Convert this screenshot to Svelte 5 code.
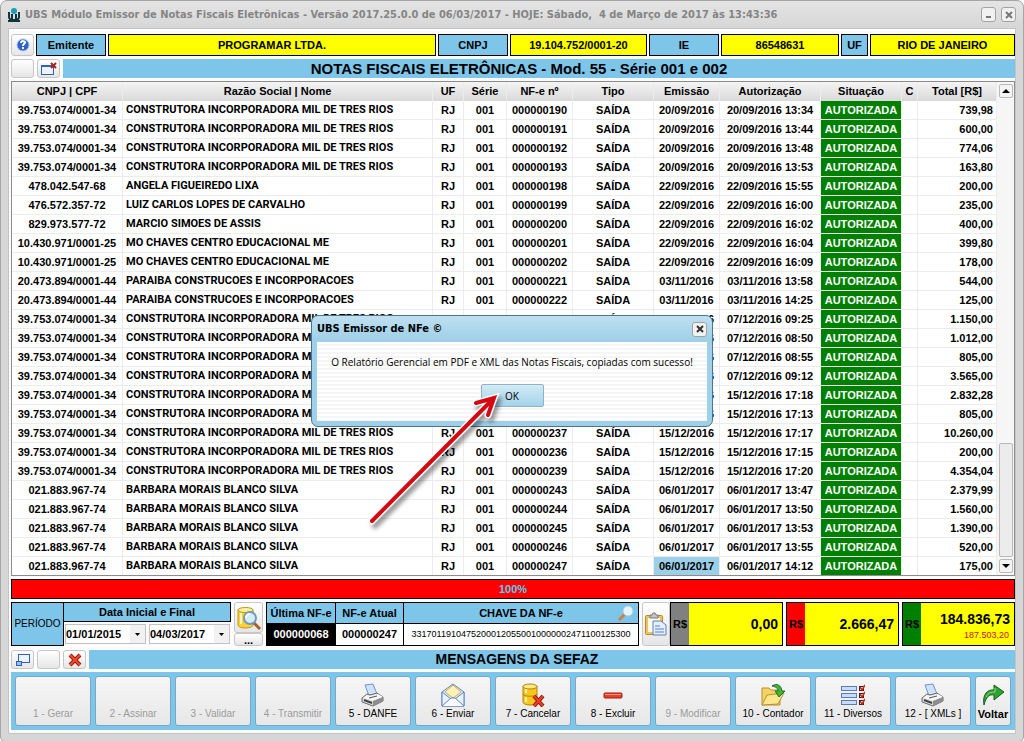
<script lang="ts">
	interface Nota {
		doc: string;
		nome: string;
		nf: string;
		emissao: string;
		hora: string;
		total: string;
	}

	const CONSTRUTORA = ['39.753.074/0001-34', 'CONSTRUTORA INCORPORADORA MIL DE TRES RIOS'];
	const CHAVES = ['10.430.971/0001-25', 'MO CHAVES CENTRO EDUCACIONAL ME'];
	const PARAIBA = ['20.473.894/0001-44', 'PARAIBA CONSTRUCOES E INCORPORACOES'];
	const BARBARA = ['021.883.967-74', 'BARBARA MORAIS BLANCO SILVA'];

	function nota([doc, nome]: string[], nf: number, emissao: string, hora: string, total: string): Nota {
		return { doc, nome, nf: String(nf).padStart(9, '0'), emissao, hora, total };
	}

	const notas: Nota[] = [
		nota(CONSTRUTORA, 190, '20/09/2016', '13:34', '739,98'),
		nota(CONSTRUTORA, 191, '20/09/2016', '13:44', '600,00'),
		nota(CONSTRUTORA, 192, '20/09/2016', '13:48', '774,06'),
		nota(CONSTRUTORA, 193, '20/09/2016', '13:53', '163,80'),
		nota(['478.042.547-68', 'ANGELA FIGUEIREDO LIXA'], 198, '22/09/2016', '15:55', '200,00'),
		nota(['476.572.357-72', 'LUIZ CARLOS LOPES DE CARVALHO'], 199, '22/09/2016', '16:00', '235,00'),
		nota(['829.973.577-72', 'MARCIO SIMOES DE ASSIS'], 200, '22/09/2016', '16:02', '400,00'),
		nota(CHAVES, 201, '22/09/2016', '16:04', '399,80'),
		nota(CHAVES, 202, '22/09/2016', '16:09', '178,00'),
		nota(PARAIBA, 221, '03/11/2016', '13:58', '544,00'),
		nota(PARAIBA, 222, '03/11/2016', '14:25', '125,00'),
		nota(CONSTRUTORA, 231, '07/12/2016', '09:25', '1.150,00'),
		nota(CONSTRUTORA, 228, '07/12/2016', '08:50', '1.012,00'),
		nota(CONSTRUTORA, 229, '07/12/2016', '08:55', '805,00'),
		nota(CONSTRUTORA, 230, '07/12/2016', '09:12', '3.565,00'),
		nota(CONSTRUTORA, 238, '15/12/2016', '17:18', '2.832,28'),
		nota(CONSTRUTORA, 235, '15/12/2016', '17:13', '805,00'),
		nota(CONSTRUTORA, 237, '15/12/2016', '17:17', '10.260,00'),
		nota(CONSTRUTORA, 236, '15/12/2016', '17:15', '200,00'),
		nota(CONSTRUTORA, 239, '15/12/2016', '17:20', '4.354,04'),
		nota(BARBARA, 243, '06/01/2017', '13:47', '2.379,99'),
		nota(BARBARA, 244, '06/01/2017', '13:50', '1.560,00'),
		nota(BARBARA, 245, '06/01/2017', '13:53', '1.390,00'),
		nota(BARBARA, 246, '06/01/2017', '13:55', '520,00'),
		nota(BARBARA, 247, '06/01/2017', '14:12', '175,00')
	];

	const acoes = [
		{ label: '1 - Gerar', icon: '' },
		{ label: '2 - Assinar', icon: '' },
		{ label: '3 - Validar', icon: '' },
		{ label: '4 - Transmitir', icon: '' },
		{ label: '5 - DANFE', icon: 'printer' },
		{ label: '6 - Enviar', icon: 'mail' },
		{ label: '7 - Cancelar', icon: 'cancel' },
		{ label: '8 - Excluir', icon: 'minus' },
		{ label: '9 - Modificar', icon: '' },
		{ label: '10 - Contador', icon: 'folder' },
		{ label: '11 - Diversos', icon: 'list' },
		{ label: '12 - [ XMLs ]', icon: 'printer' }
	];

	let selected = $state(notas.length - 1);
	let showDialog = $state(true);
	let inicio = $state('01/01/2015');
	let fim = $state('04/03/2017');
</script>

{#snippet icon(name: string)}
	<svg width="24" height="24" viewBox="0 0 24 24" aria-hidden="true">
		{#if name === 'printer'}
			<path d="M4 2 12 1l4 10-8 2z" fill="#cfe2fb" stroke="#6f95cf" />
			<path d="m1 15 5-4 3 1 7-2 6 4v4L12 23 1 19z" fill="#d9d9d9" stroke="#6b6b6b" />
			<path d="m2 15 10 3 10-4-5-3-8 2-3-1z" fill="#f6f6f6" />
			<path d="m12 18 10-4v4l-10 5z" fill="#8d8d8d" />
			<path d="m3 17 8 3" stroke="#444" stroke-width="2" />
			<path d="m8 15 8-2" stroke="#555" />
		{:else if name === 'mail'}
			<path d="M1 9 12 1l11 8v14H1z" fill="#dbe9fc" stroke="#6185c2" />
			<path d="m4 9 8-7 8 7-8 6z" fill="#fff2b8" stroke="#d3b04c" />
			<path d="m1 9 9 7h4l9-7v14H1z" fill="#e8f1fe" stroke="#6185c2" />
			<path d="m1 23 9-8h4l9 8" fill="#f8fbff" stroke="#6185c2" />
		{:else if name === 'cancel'}
			<path d="M2 3v16c0 4 14 4 14 0V3z" fill="#fac51c" stroke="#b38600" />
			<ellipse cx="9" cy="3.5" rx="7" ry="2.5" fill="#ffe98d" stroke="#b38600" />
			<path d="M2 11c0 3 14 3 14 0" fill="none" stroke="#b38600" />
			<path d="M5 6v4M5 14v5" stroke="#fff3b5" stroke-width="2" />
			<path d="m13 13 9 10m0-10-9 10" stroke="#8d1208" stroke-width="4" />
			<path d="m13 13 9 10m0-10-9 10" stroke="#ed4127" stroke-width="2" />
		{:else if name === 'minus'}
			<rect x="3" y="10" width="18" height="5" rx="1" fill="#e34326" stroke="#a81a08" />
			<path d="M4 11.5h16" stroke="#ff927b" />
		{:else if name === 'folder'}
			<path d="M1 5h7l2 2h9v15H1z" fill="#f6d269" stroke="#b99029" />
			<path d="m1 22 5-10 17-2-6 11z" fill="#ffe68f" stroke="#b99029" />
			<path d="M11 3c5-3 9-1 10 5h3l-6 6-4-6h3c0-3-2-4-6-5z" fill="#43b13c" stroke="#1c7323" />
		{:else if name === 'list'}
			{#each [3, 10, 17] as y}
				<rect x="0.5" y={y + 0.5} width="15" height="4" fill="#c8dcf8" stroke="#5a7db8" />
				<rect x="18.5" y={y + 0.5} width="4" height="4" fill="#fff" stroke="#222" />
				<path d="m19 {y + 1} 2 3 3-5" fill="none" stroke="#d22a17" stroke-width="1.5" />
			{/each}
		{:else if name === 'back'}
			<path d="M3 22C1 11 7 6 13 7V2l10 7-10 8v-5C8 11 5 14 3 22z" fill="#2fa32f" stroke="#14621a" />
			<path d="M5 14c2-4 5-5 9-5V5" fill="none" stroke="#8fdd7d" />
		{:else if name === 'search'}
			<path d="M1 4v15c0 4 15 4 15 0V4z" fill="#fbd13c" stroke="#c39412" />
			<ellipse cx="8.5" cy="4" rx="7.5" ry="2.5" fill="#fff0a0" stroke="#c39412" />
			<path d="M4 7v11" stroke="#fff5bd" stroke-width="2" />
			<path d="m17 17 6 6" stroke="#a55f26" stroke-width="3" />
			<circle cx="13" cy="12" r="6" fill="#d7ecfb" stroke="#6e9ac2" stroke-width="2" />
			<path d="M9 12c0-3 2-4 4-4" fill="none" stroke="#fff" stroke-width="2" />
		{:else if name === 'clipboard'}
			<rect x="1.5" y="3.5" width="17" height="19" rx="1" fill="#f0c35a" stroke="#b98a2b" />
			<rect x="4" y="6" width="12" height="14" fill="#fffbe9" />
			<path d="M6 6h8V3h-2l-1-2H9L8 3H6z" fill="#c4c4c4" stroke="#777" />
			<path d="M9 9h8l5 4v10H9z" fill="#e5effd" stroke="#5b80be" />
			<path d="M11 14h5m-5 3h9m-9 3h9" stroke="#4e81cf" />
		{/if}
	</svg>
{/snippet}

<main class="window">
	<header class="titlebar">
		<svg width="12" height="16" viewBox="0 0 12 16" aria-hidden="true">
			<path d="M1 5v5c0 4 10 4 10 0V5" fill="none" stroke="#12343c" stroke-width="2" />
			<path d="M4 7v5M8 7v5" stroke="#12343c" stroke-width="2" />
			<circle cx="6" cy="4" r="3" fill="#1a9cb3" />
			<path d="M0 13h12v2H0z" fill="#12343c" />
		</svg>
		<h1>UBS Módulo Emissor de Notas Fiscais Eletrônicas - Versão 2017.25.0.0 de 06/03/2017 - HOJE: Sábado,&nbsp; 4 de Março de 2017 às 13:43:36</h1>
		<button class="win-btn" aria-label="Minimizar"><svg width="7" height="7" viewBox="0 0 7 7"><path d="M1 6h5" stroke="#777" stroke-width="2" /></svg></button>
		<button class="win-btn" aria-label="Fechar"><svg width="8" height="8" viewBox="0 0 8 8"><path d="m1 1 6 6m0-6-6 6" stroke="#777" stroke-width="2" /></svg></button>
	</header>

	<div class="content">
		<div class="emitente">
			<button class="tool" aria-label="Ajuda">
				<svg width="14" height="14" viewBox="0 0 14 14">
					<circle cx="7" cy="7" r="6" fill="#2f62cf" stroke="#a9bfe8" />
					<path d="M5 5c0-3 5-2 4 0-1 1-2 1-2 3m0 1v2" fill="none" stroke="#fff" stroke-width="2" />
				</svg>
			</button>
			<span class="tag w-label">Emitente</span>
			<span class="tag value w-name">PROGRAMAR LTDA.</span>
			<span class="tag w-label">CNPJ</span>
			<span class="tag value w-cnpj">19.104.752/0001-20</span>
			<span class="tag w-label">IE</span>
			<span class="tag value w-ie">86548631</span>
			<span class="tag w-uf">UF</span>
			<span class="tag value w-city">RIO DE JANEIRO</span>
		</div>

		<div class="section">
			<button class="tool" aria-label="Vazio"></button>
			<button class="tool" aria-label="Fechar janela">
				<svg width="18" height="14" viewBox="0 0 18 14">
					<rect x="1.5" y="3.5" width="12" height="9" fill="#eef4fe" stroke="#2d62b8" />
					<path d="M1 4h13" stroke="#2d62b8" stroke-width="2" />
					<path d="m11 1 5 5m0-5-5 5" stroke="#a8231c" stroke-width="2" />
				</svg>
			</button>
			<h2>NOTAS FISCAIS ELETRÔNICAS - Mod. 55 - Série 001 e 002</h2>
		</div>

		<div class="grid">
			<table>
				<colgroup>
					<col class="c-doc" /><col /><col class="c-uf" /><col class="c-serie" />
					<col class="c-nf" /><col class="c-tipo" /><col class="c-emissao" /><col class="c-aut" />
					<col class="c-sit" /><col class="c-c" /><col class="c-total" />
				</colgroup>
				<thead>
					<tr>
						<th>CNPJ | CPF</th>
						<th>Razão Social | Nome</th>
						<th>UF</th>
						<th>Série</th>
						<th>NF-e nº</th>
						<th>Tipo</th>
						<th>Emissão</th>
						<th>Autorização</th>
						<th>Situação</th>
						<th>C</th>
						<th>Total [R$]</th>
					</tr>
				</thead>
				<tbody>
					{#each notas as n, i}
						<tr onclick={() => (selected = i)}>
							<td>{n.doc}</td>
							<td class="nome">{n.nome}</td>
							<td>RJ</td>
							<td>001</td>
							<td>{n.nf}</td>
							<td>SAÍDA</td>
							<td class:selected={selected === i}>{n.emissao}</td>
							<td>{n.emissao} {n.hora}</td>
							<td class="situacao">AUTORIZADA</td>
							<td></td>
							<td class="total">{n.total}</td>
						</tr>
					{/each}
				</tbody>
			</table>
			<div class="scroll">
				<button aria-label="Rolar para cima"><svg width="8" height="4" viewBox="0 0 8 4"><path d="M0 4h8L4 0z" /></svg></button>
				<div class="thumb"></div>
				<button aria-label="Rolar para baixo"><svg width="8" height="4" viewBox="0 0 8 4"><path d="M0 0h8L4 4z" /></svg></button>
			</div>
		</div>

		<div class="progress" role="progressbar" aria-valuenow="100">100%</div>

		<div class="summary">
			<div class="periodo">
				<div class="periodo-label">PERÍODO</div>
				<div class="periodo-dates">
					<div class="cap">Data Inicial e Final</div>
					<div class="dates">
						<div class="date">
							<input aria-label="Data inicial" bind:value={inicio} />
							<button aria-label="Abrir data inicial"><svg width="5" height="3" viewBox="0 0 5 3"><path d="M0 0h5L2.5 3z" /></svg></button>
						</div>
						<div class="date">
							<input aria-label="Data final" bind:value={fim} />
							<button aria-label="Abrir data final"><svg width="5" height="3" viewBox="0 0 5 3"><path d="M0 0h5L2.5 3z" /></svg></button>
						</div>
					</div>
				</div>
			</div>

			<div class="search">
				<button class="tool big" aria-label="Pesquisar">{@render icon('search')}</button>
				<button class="tool more">...</button>
			</div>

			<div class="chave">
				<div class="col w-nf">
					<div class="cap">Última NF-e</div>
					<div class="num dark">000000068</div>
				</div>
				<div class="col w-nf">
					<div class="cap">NF-e Atual</div>
					<div class="num">000000247</div>
				</div>
				<div class="col key">
					<div class="cap">
						CHAVE DA NF-e
						<svg class="lens" width="18" height="16" viewBox="0 0 18 16" aria-hidden="true">
							<path d="m8 9-6 6" stroke="#c98443" stroke-width="3" />
							<circle cx="11" cy="6" r="5" fill="#e6f4fd" stroke="#a9cbe4" />
						</svg>
					</div>
					<div class="num thin">33170119104752000120550010000002471100125300</div>
				</div>
			</div>

			<div class="totals">
				<button class="tool clip" aria-label="Copiar chave">{@render icon('clipboard')}</button>
				<div class="money gray"><span class="rs">R$</span><strong>0,00</strong></div>
			</div>
			<div class="money red"><span class="rs">R$</span><strong>2.666,47</strong></div>
			<div class="money green">
				<span class="rs">R$</span>
				<strong>184.836,73</strong>
				<small>187.503,20</small>
			</div>
		</div>

		<div class="section">
			<button class="tool" aria-label="Restaurar">
				<svg width="16" height="14" viewBox="0 0 16 14">
					<rect x="3.5" y="1.5" width="11" height="8" fill="#edf4ff" stroke="#2d62b8" />
					<rect x="1.5" y="8.5" width="5" height="4" fill="#9dbce8" stroke="#2d62b8" />
				</svg>
			</button>
			<button class="tool" aria-label="Vazio"></button>
			<button class="tool" aria-label="Limpar mensagens">
				<svg width="14" height="14" viewBox="0 0 14 14">
					<path d="m2 2 10 10m0-10L2 12" stroke="#9c1c0f" stroke-width="4" />
					<path d="m2 2 10 10m0-10L2 12" stroke="#ee4a2c" stroke-width="2" />
				</svg>
			</button>
			<h2 class="sefaz">MENSAGENS DA SEFAZ</h2>
		</div>

		<nav class="actions">
			{#each acoes as a}
				<button class="action" disabled={!a.icon}>
					{#if a.icon}{@render icon(a.icon)}{/if}
					<span>{a.label}</span>
				</button>
			{/each}
			<button class="action voltar">
				{@render icon('back')}
				<span>Voltar</span>
			</button>
		</nav>
	</div>

	{#if showDialog}
		<div class="overlay">
			<div class="dialog" role="dialog" aria-labelledby="dlg-title">
				<div class="dialog-head">
					<h3 id="dlg-title">UBS Emissor de NFe ©</h3>
					<button class="win-btn" aria-label="Fechar aviso" onclick={() => (showDialog = false)}>
						<svg width="8" height="8" viewBox="0 0 8 8"><path d="m1 1 6 6m0-6-6 6" stroke="#333" stroke-width="2" /></svg>
					</button>
				</div>
				<div class="dialog-body">
					<p>O Relatório Gerencial em PDF e XML das Notas Fiscais, copiadas com sucesso!</p>
					<button class="ok" onclick={() => (showDialog = false)}>OK</button>
				</div>
				<svg class="arrow" width="140" height="142" viewBox="0 0 140 142" aria-hidden="true">
					<g fill="none" stroke-linecap="round">
						<path d="M8 132 128 11M112 14l18-5-6 17" stroke="#fff" stroke-width="7" />
						<path d="M8 132 128 11M112 14l18-5-6 17" stroke="#d40a12" stroke-width="4" />
					</g>
				</svg>
			</div>
		</div>
	{/if}
</main>

<style>
	:global(body) {
		margin: 0;
		background: #fff;
	}

	.window {
		--blue: #7ec5ea;
		--ui: 'Liberation Sans', Arial, sans-serif;
		--tahoma: 'DejaVu Sans Condensed', Tahoma, sans-serif;
		position: relative;
		box-sizing: border-box;
		min-height: 100vh;
		display: flex;
		flex-direction: column;
		padding: 0 7px 7px;
		border: 1px solid #a5a5a5;
		border-radius: 7px 7px 5px 5px;
		background: linear-gradient(#e4e4e4, #d6d6d6 28px);
		font: bold 11px/18px var(--ui);
		color: #000;
	}

	.window * {
		box-sizing: border-box;
	}

	h1,
	h2,
	h3,
	p {
		margin: 0;
	}

	button {
		display: flex;
		align-items: center;
		justify-content: center;
		padding: 0;
		font: inherit;
		color: inherit;
	}

	.titlebar {
		display: flex;
		align-items: center;
		gap: 5px;
		height: 27px;
	}

	h1 {
		flex: 1;
		font: bold 11px/18px var(--tahoma);
		color: #858585;
		white-space: nowrap;
		overflow: hidden;
	}

	.win-btn {
		width: 15px;
		height: 15px;
		border: 1px solid #a3a3a3;
		border-radius: 3px;
		background: #f1f1f1;
	}

	.content {
		flex: 1;
		display: flex;
		flex-direction: column;
		gap: 3px;
		padding: 5px 0 3px 2px;
		border: 1px solid #c3c3c3;
		background: repeating-linear-gradient(#fff 0 2px, #fafafa 2px 4px);
	}

	.tool {
		width: 23px;
		flex: none;
		border: 1px solid #c6c6c6;
		border-radius: 3px;
		background: linear-gradient(#fff, #e6e6e6);
	}

	.emitente {
		display: flex;
		gap: 2px;
		height: 22px;
	}

	.tag {
		border: 1px solid #000;
		background: var(--blue);
		line-height: 20px;
		text-align: center;
		white-space: nowrap;
	}

	.value {
		background: #ff0;
	}

	.w-label {
		width: 70px;
	}

	.w-name {
		flex: 1;
	}

	.w-cnpj {
		width: 137px;
	}

	.w-ie {
		width: 118px;
	}

	.w-uf {
		width: 27px;
	}

	.w-city {
		width: 145px;
	}

	.section {
		display: flex;
		gap: 3px;
		height: 19px;
	}

	h2 {
		flex: 1;
		padding-right: 40px;
		background: var(--blue);
		font: bold 15px/19px var(--ui);
		text-align: center;
	}

	.sefaz {
		padding-right: 70px;
		font-size: 14px;
	}

	.grid {
		display: flex;
		border: 1px solid #8c8c8c;
		background: #fff;
	}

	table {
		flex: 1;
		width: 0;
		table-layout: fixed;
		border-collapse: separate;
		border-spacing: 0;
	}

	.c-doc {
		width: 111px;
	}

	.c-uf {
		width: 31px;
	}

	.c-serie {
		width: 43px;
	}

	.c-nf,
	.c-emissao {
		width: 66px;
	}

	.c-tipo {
		width: 81px;
	}

	.c-aut {
		width: 101px;
	}

	.c-sit {
		width: 81px;
	}

	.c-c {
		width: 16px;
	}

	.c-total {
		width: 79px;
	}

	th,
	td {
		height: 19px;
		padding: 0;
		border-right: 1px solid #ececec;
		border-bottom: 1px solid #ececec;
		line-height: 18px;
		text-align: center;
		vertical-align: top;
		white-space: nowrap;
		overflow: hidden;
	}

	th {
		border-bottom: 0;
		background: linear-gradient(#f4f4f4, #d9d9d9);
	}

	tr:last-child td {
		height: 18px;
		border-bottom: 0;
	}

	.nome {
		padding-left: 3px;
		font-family: Roboto, var(--ui);
		text-align: left;
	}

	.total {
		padding-right: 3px;
		text-align: right;
	}

	.situacao {
		background: #008000;
		color: #fff;
	}

	.selected {
		background: #9ccfe8;
	}

	.scroll {
		width: 17px;
		display: flex;
		flex-direction: column;
		align-items: center;
		gap: 2px;
		padding: 2px 0;
		background: #f6f6f6;
	}

	.scroll button {
		width: 14px;
		height: 14px;
		border: 1px solid #b9b9b9;
		border-radius: 2px;
		background: #f4f4f4;
	}

	.thumb {
		width: 14px;
		height: 114px;
		margin-top: auto;
		border: 1px solid #b9b9b9;
		border-radius: 2px;
		background: #ececec;
	}

	.progress {
		height: 20px;
		border: 1px solid #000;
		background: #f00;
		color: #5ce;
		text-align: center;
	}

	.summary {
		display: flex;
		gap: 3px;
		height: 44px;
		margin-bottom: 1px;
	}

	.periodo {
		display: flex;
	}

	.periodo-label {
		width: 53px;
		border: 1px solid #000;
		background: var(--blue);
		font-size: 10px;
		font-weight: normal;
		line-height: 42px;
		text-align: center;
	}

	.cap {
		position: relative;
		border-bottom: 1px solid #000;
		background: var(--blue);
		line-height: 20px;
		text-align: center;
	}

	.periodo-dates {
		width: 167px;
	}

	.periodo-dates .cap {
		border: 1px solid #000;
		border-left: 0;
		line-height: 18px;
	}

	.dates {
		display: flex;
		gap: 3px;
		padding: 2px 1px;
	}

	.date {
		flex: 1;
		min-width: 0;
		display: flex;
		height: 20px;
		border: 1px solid #c3c3c3;
		background: #fff;
	}

	.date input {
		flex: 1;
		min-width: 0;
		padding: 0;
		border: 0;
		background: none;
		font: inherit;
	}

	.date button {
		width: 15px;
		border: 0;
		background: #f1f1f1;
	}

	.search {
		display: flex;
		flex-direction: column;
	}

	.big {
		width: 29px;
		height: 31px;
	}

	.more {
		width: 29px;
		height: 13px;
		line-height: 6px;
	}

	.chave {
		flex: 1;
		min-width: 0;
		display: flex;
		border: 1px solid #000;
		background: #fff;
	}

	.col + .col {
		border-left: 1px solid #000;
	}

	.w-nf {
		flex: none;
		width: 68px;
	}

	.key {
		flex: 1;
		min-width: 0;
	}

	.num {
		line-height: 21px;
		text-align: center;
	}

	.dark {
		background: #000;
		color: #fff;
	}

	.thin {
		font-size: 9px;
		font-weight: normal;
	}

	.lens {
		position: absolute;
		top: 2px;
		right: 3px;
	}

	.totals {
		display: flex;
	}

	.clip {
		width: 28px;
	}

	.money {
		flex: none;
		width: 113px;
		display: grid;
		grid-template-columns: 18px 1fr;
		align-items: center;
		border: 1px solid #000;
		background: #ff0;
		text-align: right;
	}

	.money strong {
		padding-right: 4px;
		font-size: 14px;
		line-height: 16px;
	}

	.money small {
		grid-column: 2;
		padding-right: 5px;
		font: 9px/11px var(--ui);
		color: #d01010;
	}

	.rs {
		grid-row: 1 / 3;
		align-self: stretch;
		line-height: 42px;
		text-align: center;
	}

	.gray strong,
	.red strong {
		grid-row: 1 / 3;
	}

	.green strong {
		align-self: end;
	}

	.gray .rs {
		background: #808080;
	}

	.red .rs {
		background: #f00;
	}

	.green .rs {
		background: #008000;
	}

	.actions {
		display: flex;
		gap: 4px;
		padding: 4px;
		background: var(--blue);
	}

	.action {
		flex: 1;
		height: 50px;
		flex-direction: column;
		justify-content: flex-end;
		padding-bottom: 4px;
		border: 1px solid #76a9c6;
		border-radius: 3px;
		background: linear-gradient(#f6f6f6, #e7e7e7);
		font-size: 10px;
		font-weight: normal;
		line-height: 14px;
		white-space: nowrap;
	}

	.action:disabled {
		color: #9b9b9b;
	}

	.voltar {
		flex: none;
		width: 36px;
		font-size: 11px;
		font-weight: bold;
	}

	.overlay {
		position: absolute;
		inset: 0;
		display: flex;
		align-items: center;
		justify-content: center;
	}

	.dialog {
		position: relative;
		width: 402px;
		padding: 0 5px 5px;
		border: 1px solid #4c7387;
		border-radius: 7px;
		background: linear-gradient(#bfe0f0, #9fd0e8 24px);
	}

	.dialog-head {
		display: flex;
		align-items: center;
		justify-content: space-between;
		height: 26px;
	}

	h3 {
		font: bold 11px/18px var(--tahoma);
	}

	.dialog-body {
		display: flex;
		flex-direction: column;
		align-items: center;
		gap: 13px;
		padding: 11px 4px 14px;
		background: repeating-linear-gradient(#fff 0 2px, #f5f5f5 2px 4px);
		font: 10px/18px 'Open Sans', Tahoma, sans-serif;
		white-space: nowrap;
	}

	.ok {
		width: 63px;
		height: 23px;
		border: 1px solid #8fb4c6;
		border-radius: 2px;
		background: linear-gradient(#d3ebf6, #a4d3e9);
	}

	.arrow {
		position: absolute;
		left: 52px;
		top: 73px;
		filter: drop-shadow(3px 4px 2px #0006);
		pointer-events: none;
	}
</style>
